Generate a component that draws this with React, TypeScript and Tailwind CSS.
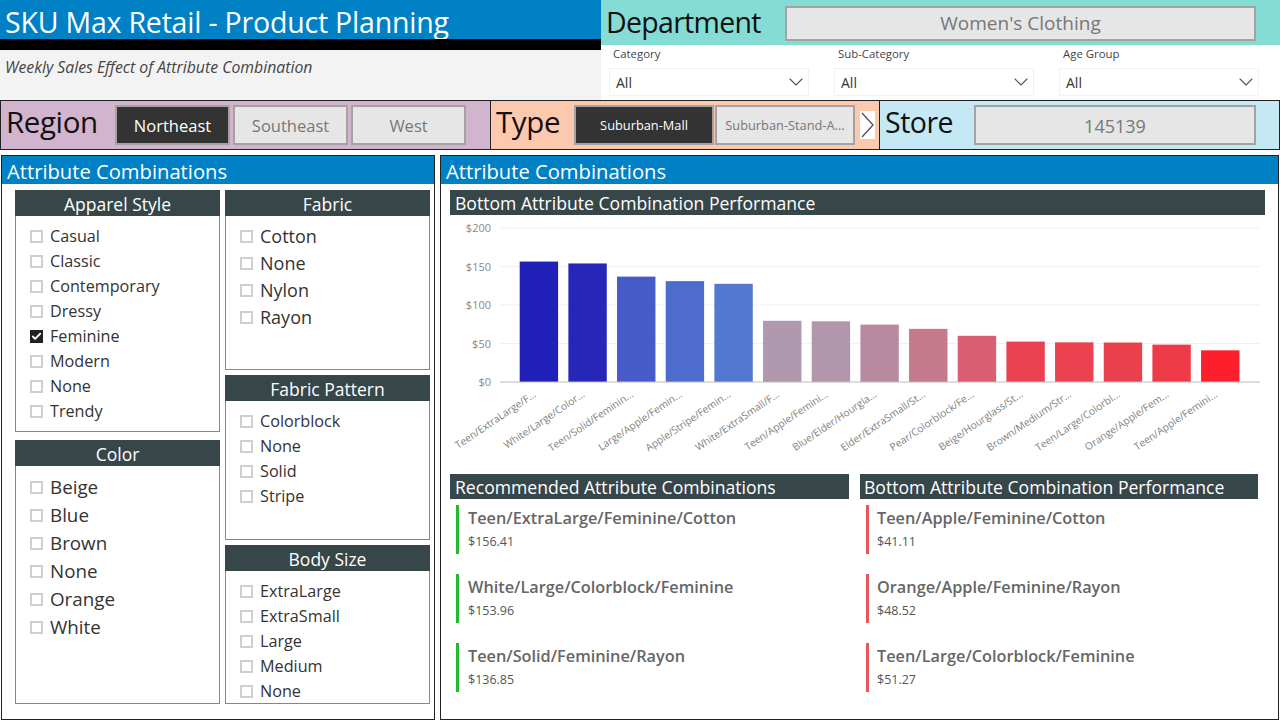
import React from "react";
import { Check, ChevronDown } from "lucide-react";

const bars = [
  { label: "Teen/ExtraLarge/F...", value: 156.41, color: "#2020b9" },
  { label: "White/Large/Color...", value: 153.96, color: "#2626b9" },
  { label: "Teen/Solid/Feminin...", value: 136.85, color: "#465ac8" },
  { label: "Large/Apple/Femin...", value: 131, color: "#4e6ccd" },
  { label: "Apple/Stripe/Femin...", value: 127.5, color: "#5378d2" },
  { label: "White/ExtraSmall/F...", value: 79.5, color: "#b098ae" },
  { label: "Teen/Apple/Femini...", value: 78.8, color: "#b296ac" },
  { label: "Blue/Elder/Hourgla...", value: 74.5, color: "#b88a9f" },
  { label: "Elder/ExtraSmall/St...", value: 69, color: "#c47a8c" },
  { label: "Pear/Colorblock/Fe...", value: 60, color: "#da5f72" },
  { label: "Beige/Hourglass/St...", value: 52.5, color: "#e9414f" },
  { label: "Brown/Medium/Str...", value: 51.5, color: "#ea404f" },
  { label: "Teen/Large/Colorbl...", value: 51.27, color: "#ea404e" },
  { label: "Orange/Apple/Fem...", value: 48.52, color: "#ee3b47" },
  { label: "Teen/Apple/Femini...", value: 41.11, color: "#fe1f2c" },
];

function Toggle({ label, active, className }: { label: string; active?: boolean; className: string }) {
  return (
    <div
      className={`h-[40px] pt-[2px] flex items-center justify-center border-2 border-[#a3a3a3] ${
        active ? "bg-[#333] text-white" : "bg-[#e6e6e6] text-[#777]"
      } ${className}`}
    >
      {label}
    </div>
  );
}

function Dropdown({ label }: { label: string }) {
  return (
    <div className="w-[200px]">
      <div className="h-[14px] pl-[4px] text-[11.4px] leading-[14px] text-[#444]">{label}</div>
      <div className="mt-[7px] h-[28px] border border-[#f2f2f2] flex items-center justify-between pl-[6px]">
        <span className="text-[14px] text-[#333]">All</span>
        <ChevronDown className="w-[24px] h-[24px] text-[#555]" strokeWidth={1.1} />
      </div>
    </div>
  );
}

function Slicer({
  title,
  items,
  checked,
  rowH,
  textSize,
  pad,
  className,
}: {
  title: string;
  items: string[];
  checked?: string;
  rowH: string;
  textSize: string;
  pad: string;
  className: string;
}) {
  return (
    <div className={`flex flex-col border border-[#7f8a8c] border-t-0 ${className}`}>
      <div className="h-[26px] -mx-px bg-[#374649] text-white text-center text-[17.5px] leading-[29px]">{title}</div>
      <div className={`pl-[14px] ${pad}`}>
        {items.map((item) => (
          <div key={item} className={`flex items-center gap-[7px] ${rowH} ${textSize} text-[#333]`}>
            {item === checked ? (
              <span className="w-[13px] h-[13px] bg-[#222] flex items-center justify-center">
                <Check className="w-[11px] h-[11px] text-white" strokeWidth={4} />
              </span>
            ) : (
              <span className="w-[13px] h-[13px] border-2 border-[#cfcfcf]" />
            )}
            <span>{item}</span>
          </div>
        ))}
      </div>
    </div>
  );
}

function Chart() {
  const y0 = 382;
  return (
    <svg className="block w-[815px] h-[254px] mt-px" viewBox="450 216 815 254">
      {[200, 150, 100, 50].map((v) => (
        <line key={v} x1={500} x2={1260} y1={y0 - v * 0.77} y2={y0 - v * 0.77} stroke="#f1f1f1" strokeWidth={1} />
      ))}
      {[200, 150, 100, 50, 0].map((v) => (
        <text key={v} x={491} y={y0 - v * 0.77 + 4} textAnchor="end" fontSize={11} fill="#888">
          ${v}
        </text>
      ))}
      {bars.map((b, i) => {
        const x = 519.7 + i * 48.67;
        const h = b.value * 0.77;
        return (
          <g key={i}>
            <rect x={x} y={y0 - h} width={38.4} height={h} fill={b.color} />
            <text
              x={x + 17}
              y={y0 + 14}
              textAnchor="end"
              fontSize={10.2}
              fill="#808080"
              transform={`rotate(-34 ${x + 17} ${y0 + 14})`}
            >
              {b.label}
            </text>
          </g>
        );
      })}
      <line x1={500} x2={1260} y1={y0} y2={y0} stroke="#bdbdbd" strokeWidth={1} />
    </svg>
  );
}

function ResultList({
  title,
  color,
  rows,
  className,
  headPad,
  rowPad,
}: {
  title: string;
  color: string;
  rows: string[][];
  className: string;
  headPad: string;
  rowPad: string;
}) {
  return (
    <div className={className}>
      <div className={`h-[25px] bg-[#374649] text-white text-[17.6px] leading-[26px] ${headPad}`}>{title}</div>
      <div className="pt-[5px] pl-[6px]">
        {rows.map(([name, value]) => (
          <div key={name} className={`h-[49px] mb-[20px] border-l-[3px] ${rowPad} ${color}`}>
            <div className="mt-px text-[16.3px] leading-[26px] font-semibold text-[#666]">{name}</div>
            <div className="text-[12.5px] leading-[22px] text-[#555]">{value}</div>
          </div>
        ))}
      </div>
    </div>
  );
}

export default function App() {
  return (
    <div className="w-[1280px] h-[720px] overflow-hidden bg-white font-['Open_Sans',sans-serif]">
      <div className="flex h-[100px]">
        <div className="w-[601px] flex flex-col">
          <div className="h-[39px] bg-[#0081c6] text-white text-[28.5px] tracking-[-0.2px] leading-[44px] pl-[5px]">
            SKU Max Retail - Product Planning
          </div>
          <div className="h-[11px] bg-black" />
          <div className="flex-1 bg-[#f3f3f3] pl-[5px] pt-[6px] text-[15.8px] italic text-[#444]">
            Weekly Sales Effect of Attribute Combination
          </div>
        </div>
        <div className="flex-1 flex flex-col">
          <div className="h-[45px] bg-[#85dcd5] flex items-center pl-[5px]">
            <div className="w-[179px] text-[28.5px] tracking-[-0.7px] text-[#111]">Department</div>
            <div className="w-[471px] h-[35px] mt-[2px] bg-[#e6e6e6] border-2 border-[#a3a3a3] text-[#777] text-[19px] flex items-center justify-center">
              Women's Clothing
            </div>
          </div>
          <div className="flex pl-[8px] pt-[2px] gap-[25px]">
            <Dropdown label="Category" />
            <Dropdown label="Sub-Category" />
            <Dropdown label="Age Group" />
          </div>
        </div>
      </div>

      <div className="flex h-[50px] border-y border-[#222]">
        <div className="w-[491px] bg-[#d2b4ce] border-x border-[#222] flex items-center">
          <div className="w-[114px] pl-[5px] -mt-[5px] text-[29.5px] tracking-[-0.4px] text-[#111]">Region</div>
          <div className="flex gap-[3px] text-[16.5px]">
            <Toggle label="Northeast" active className="w-[115px]" />
            <Toggle label="Southeast" className="w-[115px]" />
            <Toggle label="West" className="w-[115px]" />
          </div>
        </div>
        <div className="w-[389px] bg-[#fdc9ae] border-r border-[#222] flex items-center">
          <div className="w-[83px] pl-[5px] -mt-[5px] text-[29.5px] tracking-[-0.4px] text-[#111]">Type</div>
          <div className="flex gap-px text-[12.8px]">
            <Toggle label="Suburban-Mall" active className="w-[140px]" />
            <Toggle label="Suburban-Stand-A..." className="w-[140px]" />
          </div>
          <div className="ml-[5px] w-[15px] h-[28px] bg-white">
            <svg className="block w-[15px] h-[28px]" viewBox="0 0 15 28" fill="none">
              <polyline points="2,2 13,14 2,26" stroke="#555" strokeWidth={1.4} />
            </svg>
          </div>
        </div>
        <div className="flex-1 bg-[#c5e8f5] border-r border-[#222] flex items-center">
          <div className="w-[94px] pl-[5px] -mt-[5px] text-[28.5px] tracking-[-0.5px] text-[#111]">Store</div>
          <Toggle label="145139" className="w-[282px] text-[18px]" />
        </div>
      </div>

      <div className="flex gap-[5px] pt-[5px] pl-px">
        <div className="w-[434px] h-[565px] border border-[#222]">
          <div className="h-[28px] bg-[#0081c6] text-white text-[20.2px] leading-[30px] pl-[5px]">Attribute Combinations</div>
          <div className="flex gap-[5px] pl-[13px] pt-[6px]">
            <div className="flex flex-col gap-[8px]">
              <Slicer
                title="Apparel Style"
                items={["Casual", "Classic", "Contemporary", "Dressy", "Feminine", "Modern", "None", "Trendy"]}
                checked="Feminine"
                rowH="h-[25px]"
                textSize="text-[16.2px]"
                pad="pt-[8px]"
                className="w-[205px] h-[242px]"
              />
              <Slicer
                title="Color"
                items={["Beige", "Blue", "Brown", "None", "Orange", "White"]}
                rowH="h-[28px]"
                textSize="text-[18.8px]"
                pad="pt-[7px]"
                className="w-[205px] h-[264px]"
              />
            </div>
            <div className="flex flex-col gap-[5px]">
              <Slicer
                title="Fabric"
                items={["Cotton", "None", "Nylon", "Rayon"]}
                rowH="h-[27px]"
                textSize="text-[18px]"
                pad="pt-[7px]"
                className="w-[205px] h-[180px]"
              />
              <Slicer
                title="Fabric Pattern"
                items={["Colorblock", "None", "Solid", "Stripe"]}
                rowH="h-[25px]"
                textSize="text-[16.2px]"
                pad="pt-[8px]"
                className="w-[205px] h-[165px]"
              />
              <Slicer
                title="Body Size"
                items={["ExtraLarge", "ExtraSmall", "Large", "Medium", "None"]}
                rowH="h-[25px]"
                textSize="text-[16.2px]"
                pad="pt-[8px]"
                className="w-[205px] h-[159px]"
              />
            </div>
          </div>
        </div>

        <div className="w-[839px] h-[565px] border border-[#222]">
          <div className="h-[28px] bg-[#0081c6] text-white text-[20.2px] leading-[30px] pl-[5px]">Attribute Combinations</div>
          <div className="pl-[9px] pt-[6px]">
            <div className="w-[815px] h-[25px] bg-[#374649] text-white text-[17.6px] leading-[26px] pl-[5px]">
              Bottom Attribute Combination Performance
            </div>
            <Chart />
            <div className="flex gap-[11px] mt-[4px]">
              <ResultList
                title="Recommended Attribute Combinations"
                color="border-[#22b92f]"
                className="w-[399px]"
                headPad="pl-[5px]"
                rowPad="pl-[9px]"
                rows={[
                  ["Teen/ExtraLarge/Feminine/Cotton", "$156.41"],
                  ["White/Large/Colorblock/Feminine", "$153.96"],
                  ["Teen/Solid/Feminine/Rayon", "$136.85"],
                ]}
              />
              <ResultList
                title="Bottom Attribute Combination Performance"
                color="border-[#e8555a]"
                className="w-[398px]"
                headPad="pl-[4px]"
                rowPad="pl-[8px]"
                rows={[
                  ["Teen/Apple/Feminine/Cotton", "$41.11"],
                  ["Orange/Apple/Feminine/Rayon", "$48.52"],
                  ["Teen/Large/Colorblock/Feminine", "$51.27"],
                ]}
              />
            </div>
          </div>
        </div>
      </div>
    </div>
  );
}
